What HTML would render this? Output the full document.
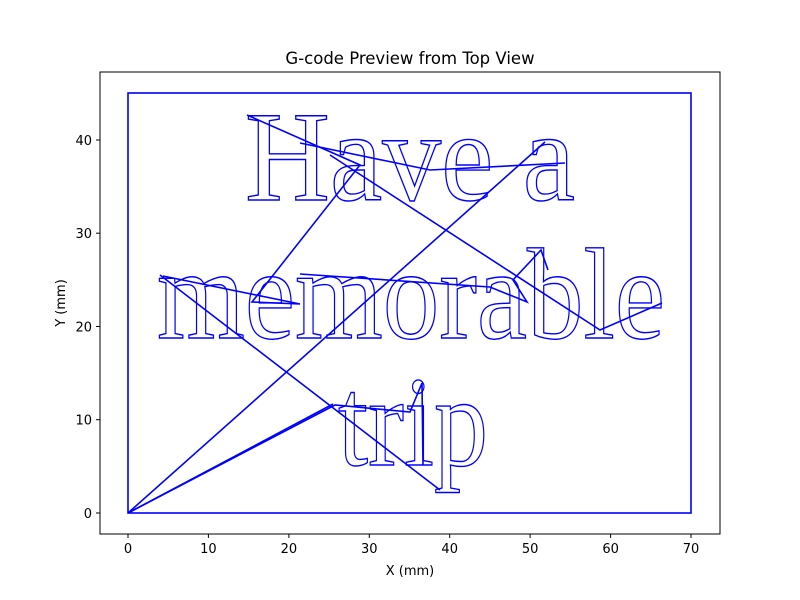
<!DOCTYPE html>
<html><head><meta charset="utf-8"><style>html,body{margin:0;padding:0;background:#fff}svg{display:block}</style></head>
<body>
<svg width="800" height="600" viewBox="0 0 800 600" xmlns="http://www.w3.org/2000/svg" font-family="DejaVu Sans, Liberation Sans, sans-serif">
<rect width="800" height="600" fill="#fff"/>
<text x="410" y="64" font-size="16.5" text-anchor="middle" fill="#000">G-code Preview from Top View</text>
<g stroke="#0000ff" stroke-width="1.6" fill="none">
<rect x="128" y="93" width="563" height="420"/>
<polyline points="128,513 545,142"/>
<polyline points="128,513 335,405 410,412 422,383 423,465"/>
<polyline points="128,513 333,404"/>
<polyline points="160,275 440,490"/>
<polyline points="247,115 360,165 252,302 300,304 163,276"/>
<polyline points="300,143 430,170 565,163"/>
<polyline points="330,155 600,330 662,303"/>
<polyline points="300,274 490,287 527,302 513,280 541,250 548,270"/>
</g>
<g fill="none" stroke="#0000ff" stroke-width="1.4" font-family="Liberation Serif, serif">
<text x="245" y="200" font-size="128" textLength="330" lengthAdjust="spacingAndGlyphs">Have a</text>
<text x="157" y="338" font-size="130" textLength="508" lengthAdjust="spacingAndGlyphs">memorable</text>
<text x="338" y="465" font-size="128" textLength="150" lengthAdjust="spacingAndGlyphs">trip</text>
</g>
<rect x="100" y="72" width="620" height="462" fill="none" stroke="#000" stroke-width="1"/>
<g stroke="#000" stroke-width="1">
<line x1="128" y1="534" x2="128" y2="538"/><line x1="208.4" y1="534" x2="208.4" y2="538"/><line x1="288.9" y1="534" x2="288.9" y2="538"/><line x1="369.3" y1="534" x2="369.3" y2="538"/><line x1="449.7" y1="534" x2="449.7" y2="538"/><line x1="530.1" y1="534" x2="530.1" y2="538"/><line x1="610.6" y1="534" x2="610.6" y2="538"/><line x1="691" y1="534" x2="691" y2="538"/>
<line x1="96" y1="513" x2="100" y2="513"/><line x1="96" y1="419.7" x2="100" y2="419.7"/><line x1="96" y1="326.5" x2="100" y2="326.5"/><line x1="96" y1="233.2" x2="100" y2="233.2"/><line x1="96" y1="140" x2="100" y2="140"/>
</g>
<g font-size="13" fill="#000" text-anchor="middle">
<text x="128" y="553">0</text><text x="208.4" y="553">10</text><text x="288.9" y="553">20</text><text x="369.3" y="553">30</text><text x="449.7" y="553">40</text><text x="530.1" y="553">50</text><text x="610.6" y="553">60</text><text x="691" y="553">70</text>
<text x="410" y="575">X (mm)</text>
</g>
<g font-size="13" fill="#000" text-anchor="end">
<text x="92" y="518">0</text><text x="92" y="424.7">10</text><text x="92" y="331.5">20</text><text x="92" y="238.2">30</text><text x="92" y="145">40</text>
</g>
<text x="65" y="303" font-size="13" text-anchor="middle" transform="rotate(-90 65 303)">Y (mm)</text>
</svg>
</body></html>
